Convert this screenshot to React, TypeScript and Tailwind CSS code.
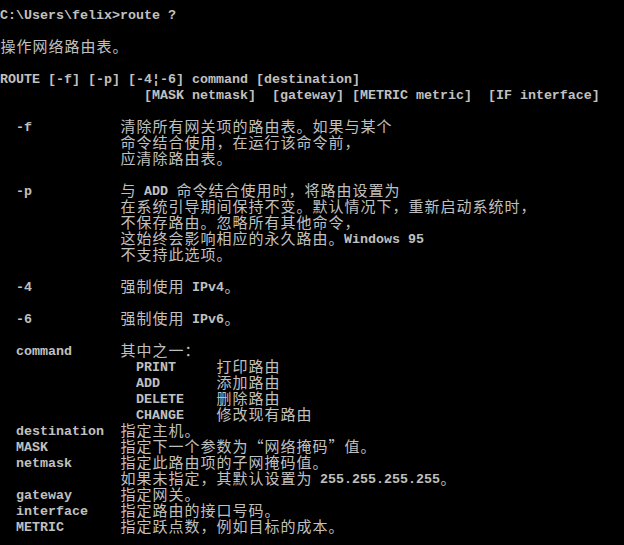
const lines: string[] = [
  "C:\\Users\\felix>route ?",
  "",
  "操作网络路由表。",
  "",
  "ROUTE [-f] [-p] [-4¦-6] command [destination]",
  "                  [MASK netmask]  [gateway] [METRIC metric]  [IF interface]",
  "",
  "  -f           清除所有网关项的路由表。如果与某个",
  "               命令结合使用，在运行该命令前，",
  "               应清除路由表。",
  "",
  "  -p           与 ADD 命令结合使用时，将路由设置为",
  "               在系统引导期间保持不变。默认情况下，重新启动系统时，",
  "               不保存路由。忽略所有其他命令，",
  "               这始终会影响相应的永久路由。Windows 95",
  "               不支持此选项。",
  "",
  "  -4           强制使用 IPv4。",
  "",
  "  -6           强制使用 IPv6。",
  "",
  "  command      其中之一：",
  "                 PRINT     打印路由",
  "                 ADD       添加路由",
  "                 DELETE    删除路由",
  "                 CHANGE    修改现有路由",
  "  destination  指定主机。",
  "  MASK         指定下一个参数为“网络掩码”值。",
  "  netmask      指定此路由项的子网掩码值。",
  "               如果未指定，其默认设置为 255.255.255.255。",
  "  gateway      指定网关。",
  "  interface    指定路由的接口号码。",
  "  METRIC       指定跃点数，例如目标的成本。",
];

// wide glyphs take two console cells
function isWide(ch: string) {
  const c = ch.codePointAt(0) || 0;
  return c >= 0x2000 && ch !== "¦";
}

function runs(text: string) {
  const out: { wide: boolean; s: string }[] = [];
  for (const ch of Array.from(text)) {
    const w = isWide(ch);
    const last = out[out.length - 1];
    if (last && last.wide === w) last.s += ch;
    else out.push({ wide: w, s: ch });
  }
  return out;
}

function Line({ text }: { text: string }) {
  return (
    <div className="flex h-[16px] items-center whitespace-pre">
      {runs(text).map((r, i) =>
        r.wide ? (
          <span key={i} className="flex">
            {Array.from(r.s).map((ch, j) => (
              <span
                key={j}
                className="inline-block w-[16px] text-center text-[15px] leading-[16px] font-['Noto_Sans_CJK_SC',sans-serif]"
              >
                {ch}
              </span>
            ))}
          </span>
        ) : (
          <span
            key={i}
            className="inline-block translate-y-[2px] text-[13.333px] leading-[16px] font-bold font-['Liberation_Mono',monospace]"
            style={{ width: r.s.length * 8 }}
          >
            {r.s}
          </span>
        )
      )}
    </div>
  );
}

export default function App() {
  return (
    <div className="min-h-[545px] w-[624px] overflow-hidden bg-black pt-[6px] text-[#c0c0c0]">
      {lines.map((l, i) => (
        <Line key={i} text={l} />
      ))}
    </div>
  );
}
